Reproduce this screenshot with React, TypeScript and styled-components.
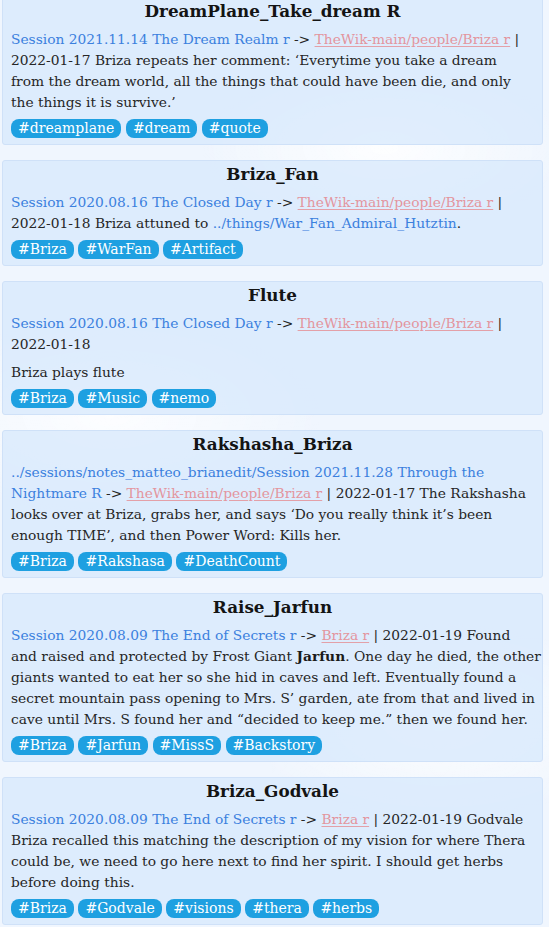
import React from "react";
import styled, { createGlobalStyle } from "styled-components";

const GlobalStyle = createGlobalStyle`
  html, body {
    margin: 0;
    padding: 0;
  }
  body {
    background:
      radial-gradient(ellipse 260px 120px at 70% 16%, rgba(255,255,255,0.9), rgba(255,255,255,0) 70%),
      radial-gradient(ellipse 300px 140px at 20% 45%, rgba(255,255,255,0.85), rgba(255,255,255,0) 70%),
      radial-gradient(ellipse 280px 140px at 80% 78%, rgba(255,255,255,0.8), rgba(255,255,255,0) 70%),
      #f0f6fe;
    font-family: "DejaVu Serif", "Liberation Serif", serif;
    color: #262626;
    overflow: hidden;
  }
`;

const List = styled.div`
  display: flex;
  flex-direction: column;
  gap: 15px;
  margin: -3px 6px 0 2px;
`;

const Card = styled.section`
  background: rgba(214, 232, 252, 0.72);
  border: 1px solid #cfe1f8;
  border-radius: 3px;
  padding: 0 8px 6px;
`;

const Title = styled.h2`
  margin: 0 0 4px;
  text-align: center;
  font-family: "DejaVu Serif", "Liberation Serif", serif;
  font-weight: bold;
  font-size: 16.8px;
  line-height: 27px;
  color: #141414;
`;

const Body = styled.div`
  font-size: 13.8px;
  line-height: 21px;
`;

const Para = styled.p`
  margin: 0;
  & + & {
    margin-top: 7px;
  }
`;

const Line = styled.span`
  display: block;
  white-space: nowrap;
`;

const InLink = styled.a`
  color: #3b80de;
  text-decoration: none;
`;

const MissingLink = styled.a`
  color: #e3959e;
  text-decoration: underline;
  text-decoration-color: #e3a0a8;
  text-underline-offset: 2px;
`;

const Strong = styled.b`
  font-weight: bold;
  color: #1a1a1a;
`;

const TagRow = styled.div`
  display: flex;
  flex-wrap: wrap;
  gap: 4.5px;
  margin-top: 6px;
`;

const Tag = styled.span`
  display: inline-flex;
  align-items: center;
  height: 19px;
  padding: 0 7px;
  border-radius: 8px;
  background: #1ea0e1;
  color: #ffffff;
  font-size: 14px;
  line-height: 19px;
`;

type Entry = {
  title: string;
  paras: React.ReactNode[][];
  tags: string[];
};

const Src = ({ session, person }: { session: React.ReactNode; person: string }) => (
  <>
    {session} -&gt; <MissingLink>{person}</MissingLink> |{" "}
  </>
);

const entries: Entry[] = [
  {
    title: "DreamPlane_Take_dream R",
    paras: [
      [
        <Src
          session={<InLink>Session 2021.11.14 The Dream Realm r</InLink>}
          person="TheWik-main/people/Briza r"
        />,
        <>2022-01-17 Briza repeats her comment: ‘Everytime you take a dream</>,
        <>from the dream world, all the things that could have been die, and only</>,
        <>the things it is survive.’</>,
      ],
    ],
    tags: ["#dreamplane", "#dream", "#quote"],
  },
  {
    title: "Briza_Fan",
    paras: [
      [
        <Src
          session={<InLink>Session 2020.08.16 The Closed Day r</InLink>}
          person="TheWik-main/people/Briza r"
        />,
        <>
          2022-01-18 Briza attuned to <InLink>../things/War_Fan_Admiral_Hutztin</InLink>.
        </>,
      ],
    ],
    tags: ["#Briza", "#WarFan", "#Artifact"],
  },
  {
    title: "Flute",
    paras: [
      [
        <Src
          session={<InLink>Session 2020.08.16 The Closed Day r</InLink>}
          person="TheWik-main/people/Briza r"
        />,
        <>2022-01-18</>,
      ],
      [<>Briza plays flute</>],
    ],
    tags: ["#Briza", "#Music", "#nemo"],
  },
  {
    title: "Rakshasha_Briza",
    paras: [
      [
        <InLink>../sessions/notes_matteo_brianedit/Session 2021.11.28 Through the</InLink>,
        <>
          <Src session={<InLink>Nightmare R</InLink>} person="TheWik-main/people/Briza r" />
          2022-01-17 The Rakshasha
        </>,
        <>looks over at Briza, grabs her, and says ‘Do you really think it’s been</>,
        <>enough TIME’, and then Power Word: Kills her.</>,
      ],
    ],
    tags: ["#Briza", "#Rakshasa", "#DeathCount"],
  },
  {
    title: "Raise_Jarfun",
    paras: [
      [
        <>
          <Src
            session={<InLink>Session 2020.08.09 The End of Secrets r</InLink>}
            person="Briza r"
          />
          2022-01-19 Found
        </>,
        <>
          and raised and protected by Frost Giant <Strong>Jarfun</Strong>. One day he died, the
          other
        </>,
        <>giants wanted to eat her so she hid in caves and left. Eventually found a</>,
        <>secret mountain pass opening to Mrs. S’ garden, ate from that and lived in</>,
        <>cave until Mrs. S found her and “decided to keep me.” then we found her.</>,
      ],
    ],
    tags: ["#Briza", "#Jarfun", "#MissS", "#Backstory"],
  },
  {
    title: "Briza_Godvale",
    paras: [
      [
        <>
          <Src
            session={<InLink>Session 2020.08.09 The End of Secrets r</InLink>}
            person="Briza r"
          />
          2022-01-19 Godvale
        </>,
        <>Briza recalled this matching the description of my vision for where Thera</>,
        <>could be, we need to go here next to find her spirit. I should get herbs</>,
        <>before doing this.</>,
      ],
    ],
    tags: ["#Briza", "#Godvale", "#visions", "#thera", "#herbs"],
  },
];

export default function App() {
  return (
    <>
      <GlobalStyle />
      <List>
        {entries.map((e) => (
          <Card key={e.title}>
            <Title>{e.title}</Title>
            <Body>
              {e.paras.map((lines, i) => (
                <Para key={i}>
                  {lines.map((l, j) => (
                    <Line key={j}>{l}</Line>
                  ))}
                </Para>
              ))}
            </Body>
            <TagRow>
              {e.tags.map((t) => (
                <Tag key={t}>{t}</Tag>
              ))}
            </TagRow>
          </Card>
        ))}
      </List>
    </>
  );
}
